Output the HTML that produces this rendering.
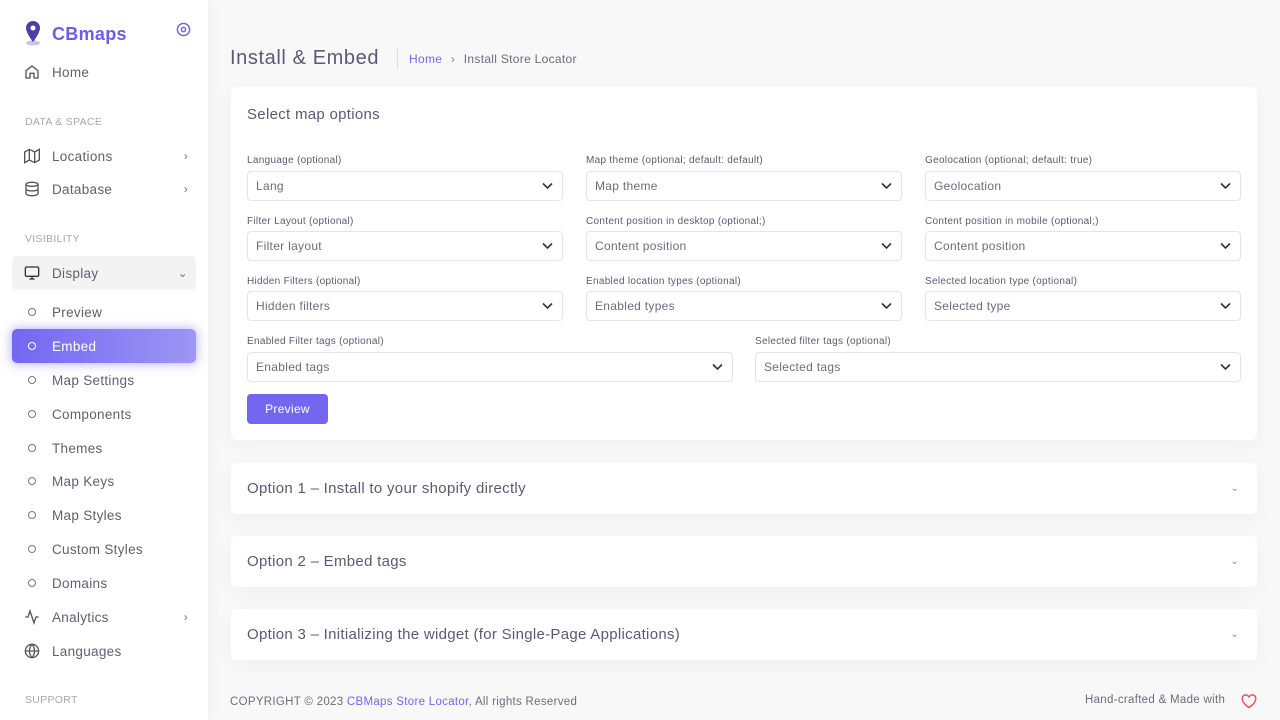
<!DOCTYPE html>
<html><head><meta charset="utf-8"><style>
*{box-sizing:border-box;margin:0;padding:0}
body{width:1280px;height:720px;overflow:hidden;background:#f8f8f8;font-family:"Liberation Sans",sans-serif;color:#6e6b7b;position:relative;letter-spacing:.3px}
.sb{position:absolute;left:0;top:0;width:208px;height:720px;background:#fff;box-shadow:0 0 15px rgba(0,0,0,.05)}
.abs{position:absolute}
.logo{left:52px;top:24px;font-size:18px;font-weight:bold;color:#6c5ce7}
.item{position:absolute;left:12px;width:184px;height:34px;display:flex;align-items:center;font-size:13.5px;color:#625f6e}
.item .ic{width:40px;padding-left:12px;display:flex;align-items:center}
.item .ch{position:absolute;right:8px;font-size:12px;color:#777}
.sec{position:absolute;left:25px;font-size:10.5px;color:#a8a6b0;letter-spacing:.3px}
.dot{width:8px;height:8px;border:1.3px solid #777;border-radius:50%;margin-left:4px}
.card{position:absolute;left:231px;width:1026px;background:#fff;border-radius:6px;box-shadow:0 4px 20px rgba(0,0,0,.04)}
.lbl{position:absolute;font-size:10px;color:#5e5873}
.sel{position:absolute;height:30px;border:1px solid #e4e3ea;border-radius:4px;font-size:12px;color:#6e6b7b;padding-left:8px;line-height:28px}
.sel svg{position:absolute;right:9px;top:10px}
.acc{font-size:15px;color:#5e5873;padding-left:16px;line-height:51px;height:51px}
.acc span{position:absolute;right:18px;top:0;font-size:10px;color:#888}
</style></head><body>
<div class="sb">
<svg class="abs" style="left:24px;top:20px" width="18" height="26" viewBox="0 0 18 26"><ellipse cx="9" cy="23" rx="7" ry="2.5" fill="#c9c3f0"/><path d="M9 1a7 7 0 0 0-7 7c0 5 7 14 7 14s7-9 7-14a7 7 0 0 0-7-7z" fill="#4b3fa8"/><circle cx="9" cy="8" r="2.5" fill="#fff"/></svg>
<div class="abs logo">CBmaps</div>
<svg class="abs" style="left:176px;top:22px" width="15" height="15" viewBox="0 0 16 16"><circle cx="8" cy="8" r="6.5" fill="none" stroke="#6c5ce7" stroke-width="1.5"/><circle cx="8" cy="8" r="2.3" fill="none" stroke="#6c5ce7" stroke-width="1.5"/></svg>
<div class="item" style="top:55px"><div class="ic"><svg width="16" height="16" viewBox="0 0 24 24" fill="none" stroke="#555" stroke-width="2"><path d="M3 10l9-7 9 7v11h-6v-7H9v7H3z"/></svg></div>Home</div>
<div class="sec" style="top:116px">DATA &amp; SPACE</div>
<div class="item" style="top:139px"><div class="ic"><svg width="16" height="16" viewBox="0 0 24 24" fill="none" stroke="#555" stroke-width="2"><path d="M1 6v16l7-4 8 4 7-4V2l-7 4-8-4-7 4zM8 2v16M16 6v16"/></svg></div>Locations<span class="ch">›</span></div>
<div class="item" style="top:172px"><div class="ic"><svg width="16" height="16" viewBox="0 0 24 24" fill="none" stroke="#555" stroke-width="2"><ellipse cx="12" cy="5" rx="9" ry="3"/><path d="M21 12c0 1.7-4 3-9 3s-9-1.3-9-3M3 5v14c0 1.7 4 3 9 3s9-1.3 9-3V5"/></svg></div>Database<span class="ch">›</span></div>
<div class="sec" style="top:233px">VISIBILITY</div>
<div class="item" style="top:256px;background:#f3f3f3;border-radius:5px"><div class="ic"><svg width="16" height="16" viewBox="0 0 24 24" fill="none" stroke="#333" stroke-width="2"><rect x="2" y="3" width="20" height="14" rx="2"/><path d="M8 21h8M12 17v4"/></svg></div>Display<span class="ch">⌄</span></div>
<div class="item" style="top:295px"><div class="ic"><div class="dot"></div></div>Preview</div>
<div class="item" style="top:329px;background:linear-gradient(90deg,#7367f0,#9e95f5);border-radius:5px;color:#fff;box-shadow:0 0 10px 1px rgba(115,103,240,.5)"><div class="ic"><div class="dot" style="border-color:#fff"></div></div>Embed</div>
<div class="item" style="top:363px"><div class="ic"><div class="dot"></div></div>Map Settings</div>
<div class="item" style="top:397px"><div class="ic"><div class="dot"></div></div>Components</div>
<div class="item" style="top:431px"><div class="ic"><div class="dot"></div></div>Themes</div>
<div class="item" style="top:464px"><div class="ic"><div class="dot"></div></div>Map Keys</div>
<div class="item" style="top:498px"><div class="ic"><div class="dot"></div></div>Map Styles</div>
<div class="item" style="top:532px"><div class="ic"><div class="dot"></div></div>Custom Styles</div>
<div class="item" style="top:566px"><div class="ic"><div class="dot"></div></div>Domains</div>
<div class="item" style="top:600px"><div class="ic"><svg width="16" height="16" viewBox="0 0 24 24" fill="none" stroke="#555" stroke-width="2"><path d="M22 12h-4l-3 9L9 3l-3 9H2"/></svg></div>Analytics<span class="ch">›</span></div>
<div class="item" style="top:634px"><div class="ic"><svg width="16" height="16" viewBox="0 0 24 24" fill="none" stroke="#555" stroke-width="2"><circle cx="12" cy="12" r="10"/><path d="M2 12h20M12 2a15 15 0 0 1 0 20M12 2a15 15 0 0 0 0 20"/></svg></div>Languages</div>
<div class="sec" style="top:694px">SUPPORT</div>
</div>

<div class="abs" style="left:230px;top:47px;font-size:20px;color:#5e5873;letter-spacing:.6px">Install &amp; Embed</div>
<div class="abs" style="left:397px;top:47px;width:1px;height:22px;background:#ddd"></div>
<div class="abs" style="left:409px;top:52px;font-size:12px;color:#7367f0">Home <span style="color:#888;margin:0 5px">›</span> <span style="color:#6e6b7b">Install Store Locator</span></div>

<div class="card" style="top:87px;height:353px">
<div class="abs" style="left:16px;top:19px;font-size:15px;color:#5e5873">Select map options</div>
</div>
<div class="lbl" style="left:247px;top:155px">Language (optional)</div>
<div class="lbl" style="left:586px;top:155px">Map theme (optional; default: default)</div>
<div class="lbl" style="left:925px;top:155px">Geolocation (optional; default: true)</div>
<div class="sel" style="left:247px;top:171px;width:316px">Lang<svg width="11" height="8" viewBox="0 0 11 8"><path d="M1 1.5l4.5 4.5L10 1.5" fill="none" stroke="#333" stroke-width="1.6"/></svg></div>
<div class="sel" style="left:586px;top:171px;width:316px">Map theme<svg width="11" height="8" viewBox="0 0 11 8"><path d="M1 1.5l4.5 4.5L10 1.5" fill="none" stroke="#333" stroke-width="1.6"/></svg></div>
<div class="sel" style="left:925px;top:171px;width:316px">Geolocation<svg width="11" height="8" viewBox="0 0 11 8"><path d="M1 1.5l4.5 4.5L10 1.5" fill="none" stroke="#333" stroke-width="1.6"/></svg></div>
<div class="lbl" style="left:247px;top:216px">Filter Layout (optional)</div>
<div class="lbl" style="left:586px;top:216px">Content position in desktop (optional;)</div>
<div class="lbl" style="left:925px;top:216px">Content position in mobile (optional;)</div>
<div class="sel" style="left:247px;top:231px;width:316px">Filter layout<svg width="11" height="8" viewBox="0 0 11 8"><path d="M1 1.5l4.5 4.5L10 1.5" fill="none" stroke="#333" stroke-width="1.6"/></svg></div>
<div class="sel" style="left:586px;top:231px;width:316px">Content position<svg width="11" height="8" viewBox="0 0 11 8"><path d="M1 1.5l4.5 4.5L10 1.5" fill="none" stroke="#333" stroke-width="1.6"/></svg></div>
<div class="sel" style="left:925px;top:231px;width:316px">Content position<svg width="11" height="8" viewBox="0 0 11 8"><path d="M1 1.5l4.5 4.5L10 1.5" fill="none" stroke="#333" stroke-width="1.6"/></svg></div>
<div class="lbl" style="left:247px;top:276px">Hidden Filters (optional)</div>
<div class="lbl" style="left:586px;top:276px">Enabled location types (optional)</div>
<div class="lbl" style="left:925px;top:276px">Selected location type (optional)</div>
<div class="sel" style="left:247px;top:291px;width:316px">Hidden filters<svg width="11" height="8" viewBox="0 0 11 8"><path d="M1 1.5l4.5 4.5L10 1.5" fill="none" stroke="#333" stroke-width="1.6"/></svg></div>
<div class="sel" style="left:586px;top:291px;width:316px">Enabled types<svg width="11" height="8" viewBox="0 0 11 8"><path d="M1 1.5l4.5 4.5L10 1.5" fill="none" stroke="#333" stroke-width="1.6"/></svg></div>
<div class="sel" style="left:925px;top:291px;width:316px">Selected type<svg width="11" height="8" viewBox="0 0 11 8"><path d="M1 1.5l4.5 4.5L10 1.5" fill="none" stroke="#333" stroke-width="1.6"/></svg></div>
<div class="lbl" style="left:247px;top:336px">Enabled Filter tags (optional)</div>
<div class="lbl" style="left:755px;top:336px">Selected filter tags (optional)</div>
<div class="sel" style="left:247px;top:352px;width:486px">Enabled tags<svg width="11" height="8" viewBox="0 0 11 8"><path d="M1 1.5l4.5 4.5L10 1.5" fill="none" stroke="#333" stroke-width="1.6"/></svg></div>
<div class="sel" style="left:755px;top:352px;width:486px">Selected tags<svg width="11" height="8" viewBox="0 0 11 8"><path d="M1 1.5l4.5 4.5L10 1.5" fill="none" stroke="#333" stroke-width="1.6"/></svg></div>
<div class="abs" style="left:247px;top:394px;width:81px;height:30px;background:#7367f0;border-radius:4px;color:#fff;font-size:12px;text-align:center;line-height:30px">Preview</div>

<div class="card acc" style="top:463px">Option 1 – Install to your shopify directly<span>⌄</span></div>
<div class="card acc" style="top:536px">Option 2 – Embed tags<span>⌄</span></div>
<div class="card acc" style="top:609px">Option 3 – Initializing the widget (for Single-Page Applications)<span>⌄</span></div>

<div class="abs" style="left:230px;top:696px;font-size:11.5px;color:#6e6b7b">COPYRIGHT © 2023 <span style="color:#7367f0">CBMaps Store Locator</span>, All rights Reserved</div>
<div class="abs" style="left:1085px;top:694px;font-size:11.5px;color:#6e6b7b">Hand-crafted &amp; Made with</div>
<svg class="abs" style="left:1241px;top:694px" width="16" height="15" viewBox="0 0 24 22"><path d="M12 20S2 14 2 7.5A5 5 0 0 1 12 5a5 5 0 0 1 10 2.5C22 14 12 20 12 20z" fill="none" stroke="#ea5455" stroke-width="2.2"/></svg>
</body></html>
